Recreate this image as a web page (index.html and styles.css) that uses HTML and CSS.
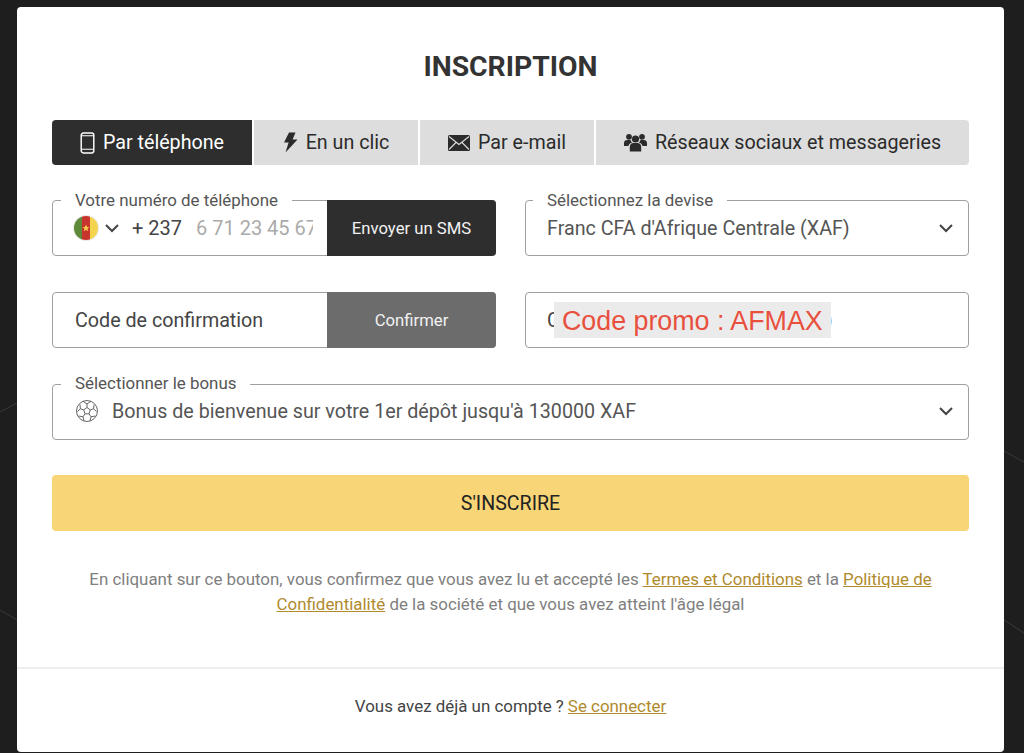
FILE: index.html
```html
<!DOCTYPE html>
<html lang="fr">
<head>
  <meta charset="UTF-8">
  <meta name="viewport" content="width=device-width, initial-scale=1.0">
  <title>Inscription</title>
  <link rel="stylesheet" href="styles.css">
</head>
<body>
  <svg class="bg-lines" width="1024" height="753" viewBox="0 0 1024 753" aria-hidden="true">
    <path d="M0 412L17 403M0 610L17 620M1004 451L1024 462M1004 620L1024 633"/>
  </svg>
  <div class="modal">
    <div class="modal-body">
      <h1 class="title">INSCRIPTION</h1>

      <div class="tabs">
        <div class="tab active">
          <svg class="tab-icon" width="15" height="22" viewBox="0 0 14 21"><rect x="1" y="1" width="12" height="19" rx="2" fill="none" stroke="currentColor" stroke-width="1.4"/><path d="M1 16.5H13M1 3.5H13" stroke="currentColor" stroke-width="1"/></svg>
          Par téléphone
        </div>
        <div class="tab">
          <svg class="tab-icon" width="15" height="21" viewBox="0 0 15 21"><path d="M6 0.5H12.5L9.6 7.5H14.5L2.5 20.5L5.6 10.5H1Z" fill="currentColor"/></svg>
          En un clic
        </div>
        <div class="tab">
          <svg class="tab-icon" width="22" height="16" viewBox="0 0 22 16"><rect width="22" height="16" rx="1.5" fill="currentColor"/><path d="M1 1.5L11 9.5L21 1.5M1 14.5L8 7.5M21 14.5L14 7.5" fill="none" stroke="#ddd" stroke-width="1.1"/></svg>
          Par e-mail
        </div>
        <div class="tab">
          <svg class="tab-icon" width="23" height="19" viewBox="0 0 23 19"><g fill="currentColor"><circle cx="11.5" cy="6" r="3.6"/><path d="M5.8 18.5V14C5.8 11.5 7.5 10 9.5 10H13.5C15.5 10 17.2 11.500 17.2 14V18.5Z"/><circle cx="5" cy="3.800" r="2.900"/><circle cx="18" cy="3.800" r="2.900"/><path d="M0 13V10C0 8 1.500 7 3 7H6.500C7 8.500 7.500 9 8.300 9.500C6 10 4.600 11.500 4.500 13Z"/><path d="M23 13V10C23 8 21.500 7 20 7H16.500C16 8.500 15.500 9 14.700 9.500C17 10 18.400 11.500 18.500 13Z"/></g></svg>
          Réseaux sociaux et messageries
        </div>
      </div>

      <div class="form-grid">
        <div class="field">
          <span class="field-label">Votre numéro de téléphone</span>
          <div class="field-row phone-row">
            <svg class="flag" width="26" height="26" viewBox="0 0 26 26">
              <defs><clipPath id="flagClip"><circle cx="13" cy="13" r="12"/></clipPath></defs>
              <circle cx="13" cy="13" r="13" fill="#e9e9e9"/>
              <g clip-path="url(#flagClip)">
                <rect x="1" y="1" width="8" height="24" fill="#5f8a3a"/>
                <rect x="9" y="1" width="8" height="24" fill="#c8342e"/>
                <rect x="17" y="1" width="8" height="24" fill="#f5d44d"/>
              </g>
              <path d="M13 9.500L14 12H16.500L14.500 13.600L15.200 16.200L13 14.700L10.800 16.200L11.500 13.600L9.500 12H12Z" fill="#f5d44d"/>
            </svg>
            <svg class="chevron" width="16" height="10" viewBox="0 0 16 10"><path d="M2 2L8 8L14 2"/></svg>
            <span class="dial-code">+ 237</span>
            <span class="phone-hint">6 71 23 45 67</span>
          </div>
          <div class="field-btn">Envoyer un SMS</div>
        </div>

        <div class="field">
          <span class="field-label">Sélectionnez la devise</span>
          <div class="field-row">
            <span class="field-value">Franc CFA d'Afrique Centrale (XAF)</span>
            <svg class="chevron end" width="16" height="10" viewBox="0 0 16 10"><path d="M2 2L8 8L14 2"/></svg>
          </div>
        </div>

        <div class="field">
          <div class="field-row">
            <span class="field-value dark">Code de confirmation</span>
          </div>
          <div class="field-btn muted">Confirmer</div>
        </div>

        <div class="field">
          <div class="field-row">
            <span class="field-value dark">Code promo (si vous en avez un)</span>
          </div>
          <span class="promo-note">Code promo : AFMAX</span>
        </div>

        <div class="field wide">
          <span class="field-label">Sélectionner le bonus</span>
          <div class="field-row">
            <svg class="ball" width="24" height="24" viewBox="0 0 24 24" fill="none" stroke="#666" stroke-width="1">
              <circle cx="12" cy="12" r="10.500"/>
              <path d="M12 8.500L15.300 10.900L14 14.800H10L8.700 10.900Z"/>
              <path d="M12 8.500V5L8 2.300M12 5L16 2.300M15.300 10.900L18.600 9.800L21.500 12.500M18.600 9.800L19 5.500M14 14.800L16 17.800L15 21.800M16 17.800L20.500 17M10 14.800L8 17.800L9 21.800M8 17.800L3.500 17M8.700 10.900L5.400 9.800L2.500 12.500M5.400 9.800L5 5.500"/>
            </svg>
            <span class="field-value">Bonus de bienvenue sur votre 1er dépôt jusqu'à 130000 XAF</span>
            <svg class="chevron end" width="16" height="10" viewBox="0 0 16 10"><path d="M2 2L8 8L14 2"/></svg>
          </div>
        </div>
      </div>

      <div class="submit-btn">S'INSCRIRE</div>

      <p class="terms">En cliquant sur ce bouton, vous confirmez que vous avez lu et accepté les <a href="#">Termes et Conditions</a> et la <a href="#">Politique de Confidentialité</a> de la société et que vous avez atteint l'âge légal</p>
    </div>

    <div class="modal-footer">
      Vous avez déjà un compte ? <a href="#">Se connecter</a>
    </div>
  </div>
</body>
</html>
```

FILE: styles.css
```css
html, body {
  height: 100%;
}
body {
  margin: 0;
  padding: 7px 20px 1px 17px;
  box-sizing: border-box;
  background-color: #1e1e1e;
  font-family: Roboto, "Liberation Sans", sans-serif;
  color: #333;
  overflow: hidden;
}
.bg-lines {
  position: absolute;
  top: 0;
  left: 0;
}
.bg-lines path {
  stroke: #3a3a3a;
  fill: none;
}
.modal {
  position: relative;
  height: 100%;
  display: flex;
  flex-direction: column;
  background-color: #fff;
  border-radius: 4px;
}
.modal-body {
  flex: 1;
  padding: 0 35px;
}
.title {
  margin: 0;
  padding: 43px 0 36px;
  font-size: 28.3px;
  line-height: 34px;
  font-weight: 700;
  text-align: center;
  color: #333;
}

/* onglets */
.tabs {
  display: grid;
  grid-template-columns: 200px 164px 174px 1fr;
  gap: 2px;
  height: 45px;
  border-radius: 4px;
  overflow: hidden;
  margin-bottom: 35px;
}
.tab {
  display: flex;
  align-items: center;
  justify-content: center;
  gap: 8px;
  background-color: #ddd;
  color: #2b2b2b;
  font-size: 19.7px;
}
.tab.active {
  background-color: #2e2e2e;
  color: #fff;
}
.tab-icon {
  flex: none;
}

/* champs */
.form-grid {
  display: grid;
  grid-template-columns: 444px 444px;
  justify-content: space-between;
  row-gap: 36px;
}
.field {
  position: relative;
  display: flex;
  height: 56px;
  box-sizing: border-box;
  border: 1px solid #a0a0a0;
  border-radius: 4px;
}
.field.wide {
  grid-column: 1 / 3;
}
.field-label {
  position: absolute;
  top: -10px;
  left: 8px;
  padding: 0 14px;
  background-color: #fff;
  font-size: 16.9px;
  line-height: 18px;
  color: #555;
}
.field:nth-child(even) .field-label {
  left: 7px;
}
.field.wide .field-label {
  top: -11px;
}
.field-row {
  flex: 1;
  min-width: 0;
  display: flex;
  align-items: center;
  gap: 13px;
  padding: 0 14px 0 22px;
}
.field:nth-child(even) .field-row {
  padding-left: 21px;
}
.field.wide .field-row {
  padding-bottom: 2px;
}
.field-value {
  font-size: 19.7px;
  color: #555;
  white-space: nowrap;
}
.field-value.dark {
  color: #444;
}
.phone-row {
  gap: 0;
  overflow: hidden;
  padding-right: 15px;
}
.flag {
  flex: none;
  margin: 0 5px 0 -2px;
}
.chevron {
  flex: none;
}
.chevron path {
  fill: none;
  stroke: #444;
  stroke-width: 2;
}
.chevron.end {
  margin-left: auto;
}
.dial-code {
  margin-left: 12px;
  font-size: 20px;
  color: #444;
  white-space: nowrap;
}
.phone-hint {
  margin-left: 14px;
  font-size: 20px;
  color: #aaa;
  white-space: nowrap;
  overflow: hidden;
}
.field-btn {
  flex: none;
  width: 169px;
  margin: -1px;
  display: flex;
  align-items: center;
  justify-content: center;
  background-color: #2e2e2e;
  border-radius: 0 4px 4px 0;
  color: #f2f2f2;
  font-size: 16.7px;
}
.field-btn.muted {
  background-color: #6c6c6c;
}
.ball {
  flex: none;
}
.promo-note {
  position: absolute;
  top: 9px;
  left: 28px;
  padding: 0 8px;
  height: 36px;
  line-height: 38px;
  background-color: #ebebeb;
  font-family: "Liberation Sans", Arial, sans-serif;
  font-size: 26.8px;
  color: #e94f3d;
  white-space: nowrap;
}

.submit-btn {
  height: 56px;
  margin-top: 35px;
  display: flex;
  align-items: center;
  justify-content: center;
  background-color: #f8d577;
  border-radius: 4px;
  font-size: 19.6px;
  color: #222;
}
.terms {
  margin: 36px 0 0;
  font-size: 16.9px;
  line-height: 25px;
  text-align: center;
  color: #808080;
}
.terms a, .modal-footer a {
  color: #b08a2e;
}
.modal-footer {
  height: 85px;
  padding-bottom: 9px;
  box-sizing: border-box;
  display: flex;
  align-items: center;
  justify-content: center;
  gap: 4px;
  border-top: 2px solid #eee;
  font-size: 16.9px;
  color: #444;
}
```
